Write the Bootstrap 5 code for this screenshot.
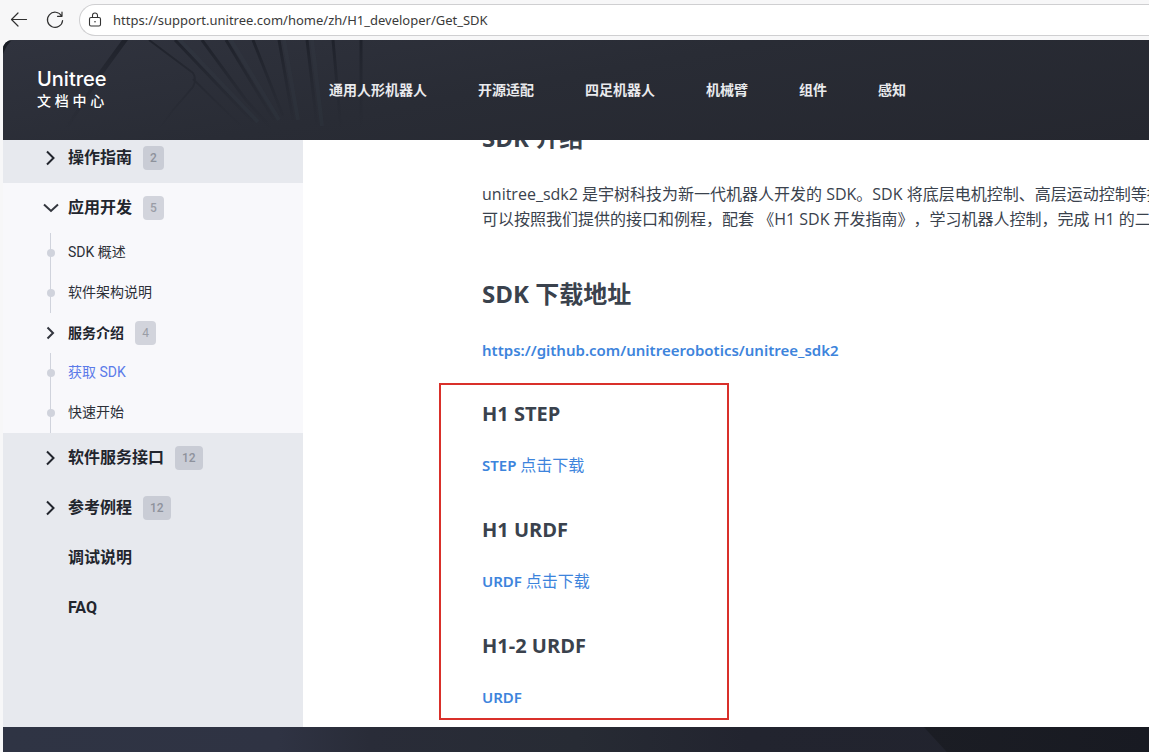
<!DOCTYPE html>
<html lang="zh-CN">
<head>
<meta charset="utf-8">
<meta name="viewport" content="width=device-width, initial-scale=1">
<title>获取 SDK - Unitree 文档中心</title>
<link href="https://cdn.jsdelivr.net/npm/bootstrap@5.3.0/dist/css/bootstrap.min.css" rel="stylesheet">
<style>
body{background:#f7f7f8;font-family:Roboto,"Noto Sans CJK SC",sans-serif;color:#22252d}
a{text-decoration:none}
button{border:0;background:none;padding:0;color:inherit}
/* browser toolbar */
.toolbar{height:40px;padding-left:9px;gap:16px}
.toolbar button{width:20px;height:20px;display:flex}
.address{height:32px;border:1px solid #cfcfd1;border-right:0;border-radius:16px 0 0 16px;background:#fff;padding-left:7px;margin-left:-2px}
.address input{border:0;outline:0;background:none;font:13px "Noto Sans","Open Sans",sans-serif;color:#3a3a3a;padding:0 0 0 10px;min-width:0}
/* site header */
.shell{margin-left:3px}
.site-head{height:100px;background:linear-gradient(170deg,#30333e 0,#292c35 45%,#25272f 100%);border-top-left-radius:9px;overflow:hidden;padding-left:34px}
.site-head .lines{position:absolute;left:0;top:0}
.brand{width:292px;color:#fff;line-height:22px;font-family:Inter,"Noto Sans CJK SC",sans-serif}
.brand strong{font-size:20px;font-weight:500}
.brand span{font-family:Inter,"Noto Sans CJK SC",sans-serif;font-size:14px;font-weight:500}
.topnav{gap:51px}
.topnav a{color:#e9eaed;font-size:14px;font-weight:700;white-space:nowrap}
/* document tree */
.tree{width:300px;background:#e7e9ee;overflow:hidden}
.tree ul{list-style:none;margin:0;padding:0}
.tree>ul{margin-top:-7px}
.tree .node{height:50px;padding-left:37px;font-size:16px;font-weight:700;width:100%;display:flex;align-items:center;color:inherit;text-align:left}
.tree .chev{width:20px;height:20px;margin-right:8px;flex:none}
.tree .open{background:#f8f8fb}
.tree .open .node{color:#22252d}
.tree .open li .node,.tree .leaf{height:40px;font-size:14px}
.tree .leaf{display:flex;align-items:center;padding:0 0 2px 65px;color:#2c2f37;position:relative}
.tree .leaf::before{content:"";position:absolute;left:47px;top:0;bottom:0;width:1px;background:#d0d3dc}
.tree .leaf::after{content:"";position:absolute;left:44px;top:16px;width:8px;height:8px;border-radius:50%;background:#d0d3dc}
.tree .leaf.current{color:#5b7be9}
.count{min-width:21px;height:24px;line-height:24px;padding:0 7px;margin-left:11px;border-radius:4px;background:#c9ccd5;color:#8e929c;font-size:12px;font-weight:500;text-align:center}
.open .count{background:#d2d4dc;color:#9a9da6}
.open li .count{font-weight:400}
/* article */
.doc{font-family:"Open Sans","Noto Sans CJK SC",sans-serif;color:#3a424d;background:#fff;padding:0 0 7px 136px;overflow:hidden;white-space:nowrap;text-spacing-trim:space-all}
.doc .intro{padding-left:43px}
.doc h2{font-size:24px;line-height:32px;font-weight:700;margin:0 0 28px}
.doc .intro h2:first-child{margin-top:-18px}
.doc p{font-size:16px;line-height:25px;margin:0}
.doc .intro p{margin-bottom:46px}
.doc .intro p:last-child{margin-bottom:20px}
.doc a{color:#3d84dc;font-family:"Noto Sans","Noto Sans CJK SC",sans-serif;font-weight:600;font-size:15px}
.doc a span{font-weight:400;font-size:16px}
.downloads{width:290px;border:2px solid #d9302a;padding:16px 0 8px 41px}
.downloads h3{font-size:20px;line-height:26px;font-weight:700;margin:39px 0 26px}
.downloads h3:first-child{margin-top:0}
.site-foot{min-height:25px;background:linear-gradient(to right,#2f3444 0,#2f3343 24%,#292c38 32%,#272b34 50%,#22242f 65%,#21232d 100%);overflow:hidden}
.facet{width:20%;background:linear-gradient(to right,#1b1d24,#181a22);clip-path:polygon(4px 0,100% 0,100% 100%,27px 100%)}
</style>
</head>
<body class="min-vh-100 d-flex flex-column overflow-hidden">
<div class="toolbar d-flex align-items-center">
  <button type="button" aria-label="返回"><svg width="20" height="20" viewBox="0 0 20 20" fill="none" stroke="#303030" stroke-width="1.2" stroke-linecap="round" stroke-linejoin="round"><path d="M9 3 2.500 9.500 9 16M2.500 9.500H17.500"/></svg></button>
  <button type="button" aria-label="刷新"><svg width="20" height="20" viewBox="0 0 20 20" fill="none" stroke="#303030" stroke-width="1.2" stroke-linecap="round" stroke-linejoin="round"><path d="M16.600 6A7.600 7.600 0 1 0 17.600 10.500M17 2V6.300H12.500"/></svg></button>
  <div class="address flex-fill d-flex align-items-center">
    <svg width="16" height="16" viewBox="0 0 16 16" fill="none" stroke="#333" stroke-width="1.1"><rect x="2.500" y="5.500" width="11" height="8.500" rx="1.500"/><path d="M5.500 5.500V3.500a2.500 2.500 0 0 1 5 0V5.500"/><circle cx="8" cy="9.800" r=".8" fill="#333" stroke="none"/></svg>
    <input class="flex-fill" type="text" aria-label="地址" value="https://support.unitree.com/home/zh/H1_developer/Get_SDK">
  </div>
</div>
<div class="shell flex-fill d-flex flex-column">
  <header class="site-head d-flex align-items-center position-relative">
    <svg class="lines" width="420" height="100" viewBox="0 0 420 100" fill="none" aria-hidden="true">
      <defs><linearGradient id="fade" gradientUnits="userSpaceOnUse" x1="0" y1="0" x2="0" y2="100"><stop stop-color="#1f222b"/><stop offset=".5" stop-color="#22252e" stop-opacity=".5"/><stop offset=".9" stop-color="#22252e" stop-opacity="0"/></linearGradient></defs>
      <path d="M0 0H9Q4 4 0 14Z" fill="#191d24"/>
      <path d="M146 0 190 33Q194 39 190 47L170 70 148 100 M190 39 238 86" stroke="url(#fade)" stroke-width="2"/>
      <path d="M119 0h6L98 37h-6ZM94 37 58 94h4L98 37Z" fill="url(#fade)"/>
      <path d="M172 0 250 82M199 0 243 60 272 92M223 0 271 80M250 0 280 76M276 0 290 80M304 0 314 86M330 0 338 90M358 0V90" stroke="url(#fade)" stroke-width="3"/>
      <path d="M177 0 255 82M228 0 276 80M281 0 295 80M309 0 319 86" stroke="#39404d" stroke-opacity=".2" stroke-width="4"/>
    </svg>
    <a class="brand d-flex flex-column position-relative" href="#"><strong>Unitree</strong><span>文 档 中 心</span></a>
    <nav class="topnav d-flex position-relative" aria-label="产品">
      <a href="#">通用人形机器人</a><a href="#">开源适配</a><a href="#">四足机器人</a><a href="#">机械臂</a><a href="#">组件</a><a href="#">感知</a>
    </nav>
  </header>
  <div class="d-flex">
    <aside class="tree flex-shrink-0">
      <ul>
        <li><button class="node" type="button"><svg class="chev" viewBox="0 0 20 20" fill="none" stroke="#22252d" stroke-width="2"><path d="M7 3.500 13.500 10 7 16.500"/></svg>操作指南<span class="count">2</span></button></li>
        <li class="open"><button class="node" type="button" aria-expanded="true"><svg class="chev" viewBox="0 0 20 20" fill="none" stroke="#33363e" stroke-width="2"><path d="M4 6.500 11 13 18 6.500"/></svg>应用开发<span class="count">5</span></button>
          <ul>
            <li><a class="leaf" href="#">SDK 概述</a></li>
            <li><a class="leaf" href="#">软件架构说明</a></li>
            <li><button class="node" type="button"><svg class="chev" viewBox="0 0 20 20" fill="none" stroke="#33363e" stroke-width="2"><path d="M7.500 4.500 13 10 7.500 15.500"/></svg>服务介绍<span class="count">4</span></button></li>
            <li><a class="leaf current" href="#" aria-current="page">获取 SDK</a></li>
            <li><a class="leaf" href="#">快速开始</a></li>
          </ul>
        </li>
        <li><button class="node" type="button"><svg class="chev" viewBox="0 0 20 20" fill="none" stroke="#22252d" stroke-width="2"><path d="M7 3.500 13.500 10 7 16.500"/></svg>软件服务接口<span class="count">12</span></button></li>
        <li><button class="node" type="button"><svg class="chev" viewBox="0 0 20 20" fill="none" stroke="#22252d" stroke-width="2"><path d="M7 3.500 13.500 10 7 16.500"/></svg>参考例程<span class="count">12</span></button></li>
        <li><a class="node" href="#"><span class="chev"></span>调试说明</a></li>
        <li><a class="node" href="#"><span class="chev"></span>FAQ</a></li>
      </ul>
    </aside>
    <main class="doc flex-fill">
      <section class="intro">
        <h2>SDK 介绍</h2>
        <p>unitree_sdk2 是宇树科技为新一代机器人开发的 SDK。SDK 将底层电机控制、高层运动控制等接<br>可以按照我们提供的接口和例程，配套 《H1 SDK 开发指南》，学习机器人控制，完成 H1 的二</p>
        <h2>SDK 下载地址</h2>
        <p><a href="https://github.com/unitreerobotics/unitree_sdk2">https://github.com/unitreerobotics/unitree_sdk2</a></p>
      </section>
      <section class="downloads">
        <h3>H1 STEP</h3>
        <p><a href="#">STEP <span>点击下载</span></a></p>
        <h3>H1 URDF</h3>
        <p><a href="#">URDF <span>点击下载</span></a></p>
        <h3>H1-2 URDF</h3>
        <p><a href="#">URDF</a></p>
      </section>
    </main>
  </div>
  <footer class="site-foot flex-fill d-flex justify-content-end"><div class="facet"></div></footer>
</div>
<script src="https://cdn.jsdelivr.net/npm/bootstrap@5.3.0/dist/js/bootstrap.bundle.min.js"></script>
</body>
</html>
